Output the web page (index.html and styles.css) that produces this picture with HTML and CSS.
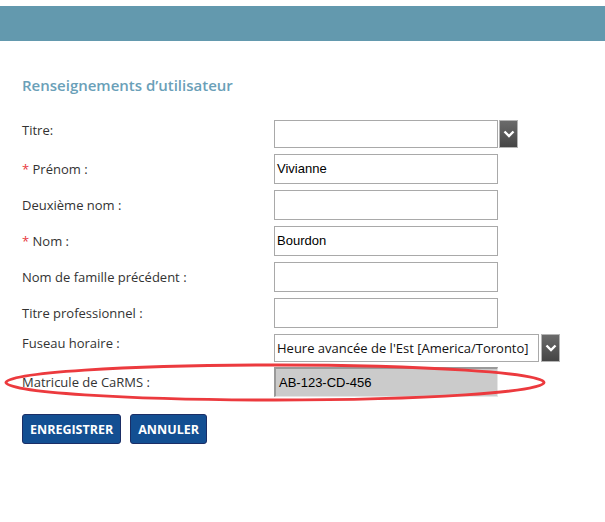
FILE: index.html
```html
<!DOCTYPE html>
<html lang="fr">
<head>
<meta charset="utf-8">
<title>Renseignements d'utilisateur</title>
<link rel="stylesheet" href="styles.css">
</head>
<body>
<div class="topbar"></div>
<main class="content">
  <h2 class="title">Renseignements d’utilisateur</h2>
  <form class="form">
    <div class="row sel-row">
      <label class="label">Titre:</label>
      <div class="select w-short"><span class="sel-text"></span></div>
      <span class="arrow"><svg width="12" height="8" viewBox="0 0 12 8"><path d="M1.5 1.5 L6 6 L10.5 1.5" fill="none" stroke="#fff" stroke-width="2.4"/></svg></span>
    </div>
    <div class="row">
      <label class="label"><span class="req">*</span> Prénom :</label>
      <div class="input">Vivianne</div>
    </div>
    <div class="row">
      <label class="label">Deuxième nom :</label>
      <div class="input"></div>
    </div>
    <div class="row">
      <label class="label"><span class="req">*</span> Nom :</label>
      <div class="input">Bourdon</div>
    </div>
    <div class="row">
      <label class="label">Nom de famille précédent :</label>
      <div class="input"></div>
    </div>
    <div class="row">
      <label class="label">Titre professionnel :</label>
      <div class="input"></div>
    </div>
    <div class="row sel-row tz-row">
      <label class="label">Fuseau horaire :</label>
      <div class="select w-long"><span class="sel-text tz">Heure avancée de l'Est [America/Toronto]</span></div>
      <span class="arrow"><svg width="12" height="8" viewBox="0 0 12 8"><path d="M1.5 1.5 L6 6 L10.5 1.5" fill="none" stroke="#fff" stroke-width="2.4"/></svg></span>
    </div>
    <div class="row mat-row">
      <label class="label">Matricule de CaRMS :</label>
      <div class="input readonly">AB-123-CD-456</div>
      <svg class="circle" width="542" height="39" viewBox="0 0 542 39"><ellipse cx="271" cy="19.5" rx="269" ry="17.5" fill="none" stroke="#ec3a3e" stroke-width="3"/></svg>
    </div>
    <div class="buttons">
      <button type="button" class="btn">ENREGISTRER</button>
      <button type="button" class="btn">ANNULER</button>
    </div>
  </form>
</main>
</body>
</html>
```
FILE: styles.css
```css
html, body {
  margin: 0;
  padding: 0;
  background: #fff;
}
body {
  font-family: "Open Sans", "Liberation Sans", sans-serif;
  color: #333;
}
.topbar {
  margin-top: 6px;
  height: 35px;
  background: #6399ae;
}
.content {
  padding: 0 22px;
}
.title {
  margin: 34px 0 25px;
  font-size: 15px;
  line-height: 20px;
  font-weight: 600;
  color: #6aa0b8;
}
.form {
  display: flex;
  flex-direction: column;
  margin: 0;
}
.row {
  position: relative;
  display: flex;
  align-items: flex-start;
  margin-bottom: 6px;
}
.label {
  width: 252px;
  flex: none;
  font-size: 13px;
  line-height: 18px;
  padding-top: 6px;
  color: #333;
}
.sel-row .label {
  padding-top: 1px;
}
.tz-row .label {
  padding-top: 0;
}
.tz-row {
  margin-bottom: 5px;
}
.req {
  color: #e8383d;
}
.input {
  box-sizing: border-box;
  width: 224px;
  height: 30px;
  border: 1px solid #a9a9a9;
  padding: 0 2px;
  font-family: "Liberation Sans", Arial, sans-serif;
  font-size: 13px;
  line-height: 28px;
  color: #000;
  background: #fff;
}
.input.readonly {
  background: #cbcbcb;
  border-width: 2px 1px 1px 2px;
  border-style: solid;
  border-color: #9a9a9a #e6e6e6 #e6e6e6 #9a9a9a;
  padding-left: 3px;
  line-height: 27px;
}
.select {
  box-sizing: border-box;
  height: 28px;
  border: 1px solid #a9a9a9;
  background: #fff;
  padding: 0 2px;
  font-size: 13px;
  line-height: 26px;
  color: #000;
  white-space: nowrap;
  overflow: hidden;
}
.w-short {
  width: 224px;
}
.w-long {
  width: 265px;
}
.sel-text.tz {
  font-family: "Open Sans", sans-serif;
  color: #111;
}
.arrow {
  box-sizing: border-box;
  width: 19px;
  height: 28px;
  margin-left: 1px;
  border: 1px solid #b5b5b5;
  background: linear-gradient(#6b6b6b, #454545);
  display: flex;
  align-items: center;
  justify-content: center;
}
.w-long + .arrow {
  margin-left: 2px;
}
.circle {
  position: absolute;
  left: -18px;
  top: -4px;
  pointer-events: none;
}
.mat-row {
  margin-bottom: 17px;
}
.buttons {
  display: flex;
  gap: 9px;
}
.btn {
  box-sizing: border-box;
  height: 30px;
  padding: 0 7px;
  border: 1px solid #1b2e66;
  border-radius: 3px;
  background: #134f92;
  color: #fff;
  font-family: "Open Sans", sans-serif;
  font-weight: 700;
  font-size: 12.5px;
  letter-spacing: 0;
  cursor: pointer;
}
```
